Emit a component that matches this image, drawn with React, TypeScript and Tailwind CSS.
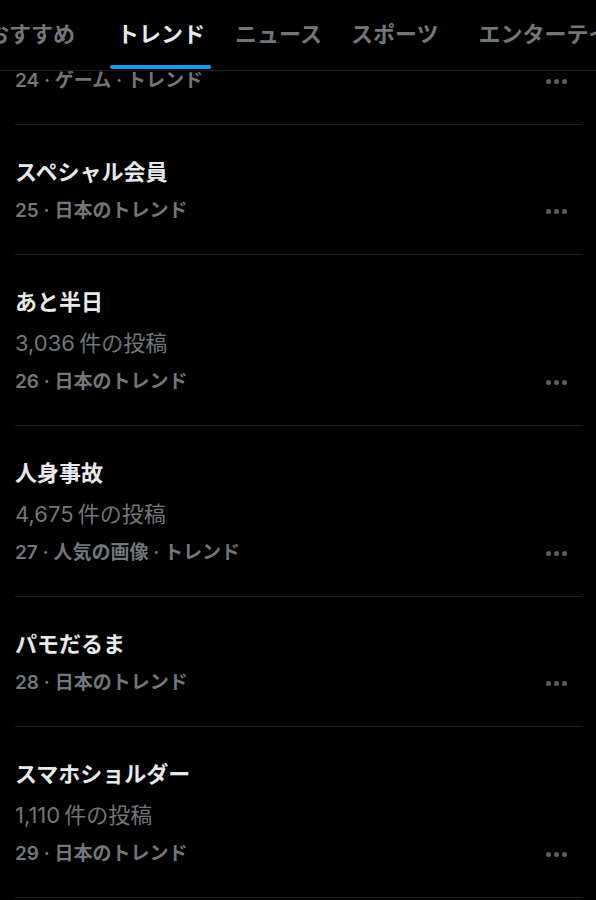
const TABS = [
  { label: "おすすめ", active: false, cls: "ml-[-13px]" },
  { label: "トレンド", active: true, cls: "ml-[42px]" },
  { label: "ニュース", active: false, cls: "ml-[30px]" },
  { label: "スポーツ", active: false, cls: "ml-[29px]" },
  { label: "エンターテインメント", active: false, cls: "ml-[40px]" },
];

type Trend = { title: string; posts?: string; meta: string };

const TRENDS: Trend[] = [
  { title: "", meta: "24 · ゲーム · トレンド" },
  { title: "スペシャル会員", meta: "25 · 日本のトレンド" },
  { title: "あと半日", posts: "3,036 件の投稿", meta: "26 · 日本のトレンド" },
  { title: "人身事故", posts: "4,675 件の投稿", meta: "27 · 人気の画像 · トレンド" },
  { title: "パモだるま", meta: "28 · 日本のトレンド" },
  { title: "スマホショルダー", posts: "1,110 件の投稿", meta: "29 · 日本のトレンド" },
];

const FONT = "font-['Inter','Noto_Sans_CJK_JP',sans-serif]";

function Dots() {
  return (
    <div className="flex items-center gap-[3px] mr-[15px]">
      <span className="w-[5px] h-[5px] rounded-full bg-[#5a5e62]" />
      <span className="w-[5px] h-[5px] rounded-full bg-[#5a5e62]" />
      <span className="w-[5px] h-[5px] rounded-full bg-[#5a5e62]" />
    </div>
  );
}

function TrendRow({ trend, first }: { trend: Trend; first: boolean }) {
  return (
    <div className={`pl-[15px] ${first ? "mt-[-76px]" : ""}`}>
      <div className="flex flex-col gap-[13px] pt-[33px] pb-[31px] border-b border-[#1d2023] mr-[14px]">
        <div className="text-[22px] leading-[28px] font-bold text-[#e7e9ea] h-[28px]">{trend.title}</div>
        {trend.posts && (
          <div className="text-[22px] leading-[28px] text-[#71767b] [word-spacing:-2px]">{trend.posts}</div>
        )}
        <div className="flex items-center justify-between">
          <span className="text-[19px] leading-[24px] font-semibold text-[#71767b]">{trend.meta}</span>
          <Dots />
        </div>
      </div>
    </div>
  );
}

export default function App() {
  return (
    <div className={`w-[596px] h-[900px] bg-black overflow-hidden ${FONT}`}>
      {/* Tabs */}
      <div className="relative z-10 bg-black h-[71px] border-b border-[#1d2023] flex items-start whitespace-nowrap overflow-hidden">
        {TABS.map((tab) => (
          <div key={tab.label} className={`relative shrink-0 h-[70px] flex items-center ${tab.cls}`}>
            <span
              className={`text-[22px] leading-[28px] mt-[-2px] ${
                tab.active ? "font-bold text-[#e7e9ea]" : "font-semibold text-[#71767b]"
              }`}
            >
              {tab.label}
            </span>
            {tab.active && (
              <div className="absolute bottom-[1px] left-[-7px] right-[-6px] h-[4px] rounded-full bg-[#1d9bf0]" />
            )}
          </div>
        ))}
      </div>

      {/* Trend list */}
      <div className="flex flex-col">
        {TRENDS.map((t, i) => (
          <TrendRow key={t.meta} trend={t} first={i === 0} />
        ))}
      </div>
    </div>
  );
}
